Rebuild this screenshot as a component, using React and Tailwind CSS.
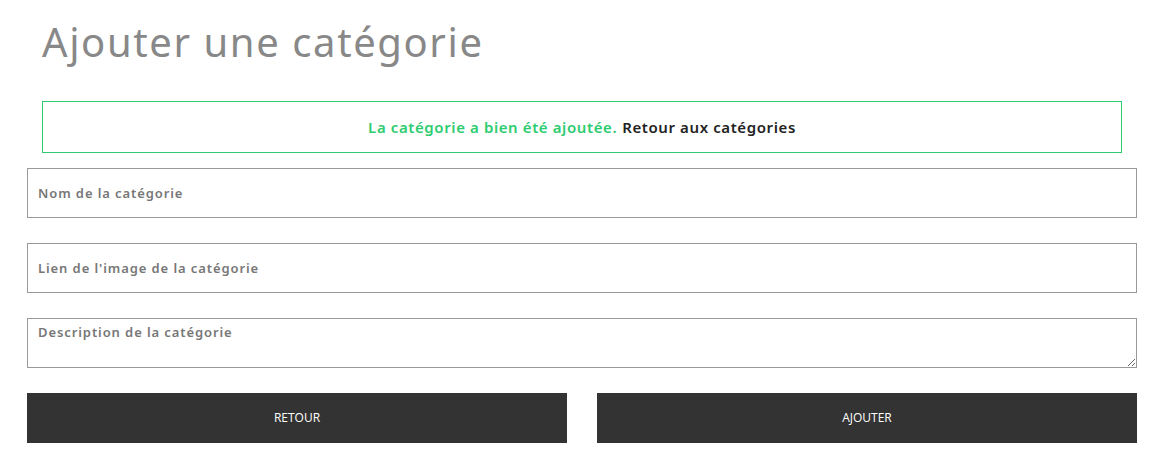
import React, { useState } from 'react';

function App() {
  const [name, setName] = useState('');
  const [image, setImage] = useState('');
  const [description, setDescription] = useState('');

  const fieldClass =
    'block w-full h-[50px] border border-[#999] bg-white px-[10px] text-[13px] font-semibold tracking-[0.07em] text-[#333] placeholder:text-[#777] outline-none';

  return (
    <div className="min-h-[471px] bg-white font-['Noto_Sans',sans-serif]">
      <div className="ml-[27px] w-[1110px] pt-[14px]">
        {/* Title */}
        <h1 className="px-[15px] text-[40px] leading-[56px] font-normal tracking-[0.04em] text-[#888]">
          Ajouter une catégorie
        </h1>

        {/* Success message */}
        <div className="mx-[15px] mt-[31px] flex h-[52px] items-center justify-center border border-[#2ecc71] text-[15px] font-semibold tracking-[0.04em]">
          <span className="text-[#2ecc71]">La catégorie a bien été ajoutée.</span>
          <a href="#" className="ml-[5px] text-[#222]">Retour aux catégories</a>
        </div>

        <form className="mt-[15px] flex flex-col gap-[25px]" onSubmit={(e) => e.preventDefault()}>
          <input
            type="text"
            value={name}
            onChange={(e) => setName(e.target.value)}
            placeholder="Nom de la catégorie"
            className={fieldClass}
          />
          <input
            type="text"
            value={image}
            onChange={(e) => setImage(e.target.value)}
            placeholder="Lien de l'image de la catégorie"
            className={fieldClass}
          />
          <textarea
            value={description}
            onChange={(e) => setDescription(e.target.value)}
            placeholder="Description de la catégorie"
            className={`${fieldClass} pt-[4px] leading-[18px]`}
          />

          {/* Buttons */}
          <div className="flex gap-[30px]">
            <button
              type="button"
              className="h-[50px] flex-1 bg-[#333] text-[12px] uppercase text-white font-['Open_Sans',sans-serif]"
            >
              Retour
            </button>
            <button
              type="submit"
              className="h-[50px] flex-1 bg-[#333] text-[12px] uppercase text-white font-['Open_Sans',sans-serif]"
            >
              Ajouter
            </button>
          </div>
        </form>
      </div>
    </div>
  );
}

export default App;
